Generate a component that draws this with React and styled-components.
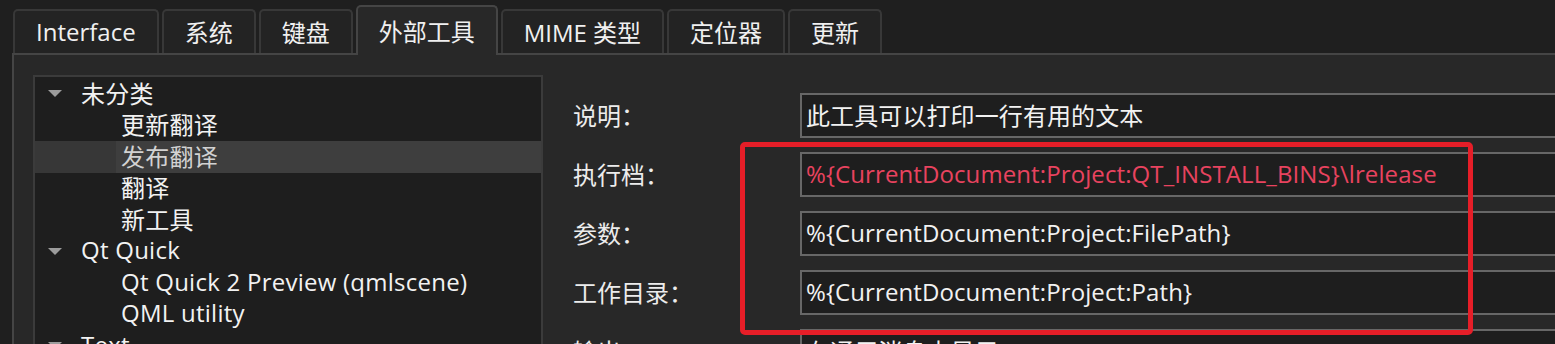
import React from "react";
import styled, {createGlobalStyle} from "styled-components";

const tabs = ["Interface", "系统", "键盘", "外部工具", "MIME 类型", "定位器", "更新"];

const treeItems = [
    {label: "未分类", depth: 0},
    {label: "更新翻译", depth: 1},
    {label: "发布翻译", depth: 1, selected: true},
    {label: "翻译", depth: 1},
    {label: "新工具", depth: 1},
    {label: "Qt Quick", depth: 0},
    {label: "Qt Quick 2 Preview (qmlscene)", depth: 1},
    {label: "QML utility", depth: 1},
    {label: "Text", depth: 0},
];

const fields = [
    {label: "说明：", value: "此工具可以打印一行有用的文本"},
    {label: "执行档：", value: "%{CurrentDocument:Project:QT_INSTALL_BINS}\\lrelease", invalid: true},
    {label: "参数：", value: "%{CurrentDocument:Project:FilePath}"},
    {label: "工作目录：", value: "%{CurrentDocument:Project:Path}"},
    {label: "输出：", value: "在通用消息中显示"},
];

export default function App() {
    return (
        <Page>
            <GlobalStyle />
            <TabBar>
                {tabs.map((tab, index) => (
                    <Tab key={index} $active={index === 3}>{tab}</Tab>
                ))}
            </TabBar>
            <Pane>
                <Tree>
                    {treeItems.map((item, index) => (
                        <TreeRow key={index} $depth={item.depth} $selected={item.selected}>
                            {item.depth === 0 && <Arrow />}
                            <TreeLabel $selected={item.selected}>{item.label}</TreeLabel>
                        </TreeRow>
                    ))}
                </Tree>
                <Form>
                    {fields.map((field, index) => (
                        <React.Fragment key={index}>
                            <Label>{field.label}</Label>
                            <Field $invalid={field.invalid}>{field.value}</Field>
                        </React.Fragment>
                    ))}
                </Form>
            </Pane>
            <Highlight />
        </Page>
    );
}

const GlobalStyle = createGlobalStyle`
  body {
    margin: 0;
    background: #1f1f1f;
    font-family: "Open Sans", "Noto Sans", "Noto Sans CJK SC", sans-serif;
  }
`;

const Page = styled.div`
  position: relative;
  width: 1555px;
  height: 344px;
  overflow: hidden;
  box-sizing: border-box;
  padding-left: 12px;
  background: #1f1f1f;
  color: #f0f0f0;
  font-size: 24px;
`;

const TabBar = styled.div`
  display: flex;
  align-items: flex-end;
  gap: 3px;
  height: 55px;
  padding-left: 1px;
`;

const Tab = styled.div`
  position: relative;
  z-index: 1;
  display: flex;
  align-items: center;
  box-sizing: border-box;
  height: ${(p) => (p.$active ? "50px" : "44px")};
  margin-bottom: ${(p) => (p.$active ? "0" : "2px")};
  padding: 0 21px 2px;
  border: 2px solid ${(p) => (p.$active ? "#454545" : "#383838")};
  border-bottom: none;
  border-radius: 5px 5px 0 0;
  background: ${(p) => (p.$active ? "#282828" : "#232323")};
  white-space: nowrap;
`;

const Pane = styled.div`
  display: flex;
  align-items: flex-start;
  height: 300px;
  margin-top: -2px;
  margin-right: -30px;
  padding: 20px 0 0 19px;
  border-top: 2px solid #454545;
  border-left: 2px solid #454545;
  background: #282828;
`;

const Tree = styled.div`
  flex-shrink: 0;
  width: 506px;
  height: 300px;
  padding-top: 1px;
  border: 2px solid #3b3b3b;
  background: #1e1e1e;
  letter-spacing: 0.25px;
`;

const TreeRow = styled.div`
  display: flex;
  align-items: center;
  box-sizing: border-box;
  height: 31.5px;
  padding-left: ${(p) => (p.$depth === 0 ? "13px" : "86px")};
  background: ${(p) => (p.$selected ? "#373737" : "transparent")};
  white-space: nowrap;
`;

const Arrow = styled.span`
  width: 0;
  height: 0;
  margin-right: 19px;
  border-left: 7px solid transparent;
  border-right: 7px solid transparent;
  border-top: 7px solid #9c9c9c;
`;

const TreeLabel = styled.span`
  flex: ${(p) => (p.$selected ? "1" : "0 0 auto")};
  align-self: stretch;
  display: flex;
  align-items: center;
  padding-bottom: 3px;
  margin-left: ${(p) => (p.$selected ? "-5px" : "0")};
  padding-left: ${(p) => (p.$selected ? "5px" : "0")};
  background: ${(p) => (p.$selected ? "#3e3e3e" : "transparent")};
  color: ${(p) => (p.$selected ? "#d2d2d2" : "#f2f2f2")};
`;

const Form = styled.div`
  flex: 1;
  display: grid;
  grid-template-columns: 227px 1fr;
  row-gap: 14px;
  margin: 18px 0 0 30px;
`;

const Label = styled.div`
  display: flex;
  align-items: center;
  box-sizing: border-box;
  height: 45px;
  padding-bottom: 3px;
  color: #ececec;
`;

const Field = styled.div`
  display: flex;
  align-items: center;
  box-sizing: border-box;
  height: 45px;
  padding: 0 5px 3px 4px;
  border: 2px solid #676767;
  background: #1e1e1e;
  color: ${(p) => (p.$invalid ? "#e8435f" : "#f2f2f2")};
  white-space: nowrap;
  letter-spacing: 0.1px;
`;

const Highlight = styled.div`
  position: absolute;
  left: 740px;
  top: 142px;
  width: 733px;
  height: 193px;
  box-sizing: border-box;
  border: 5px solid #e61e28;
  border-radius: 5px;
  pointer-events: none;
`;
